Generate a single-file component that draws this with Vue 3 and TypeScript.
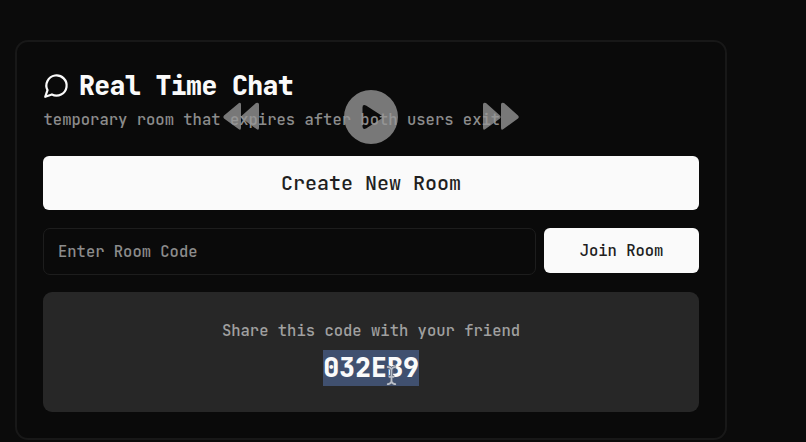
<script setup lang="ts">
import { ref } from 'vue'

const roomCode = ref<string>('032EB9')
const joinCode = ref<string>('')
</script>

<template>
  <main class="page">
    <section class="card">
      <header class="header">
        <h1 class="title">
          <svg class="bubble" viewBox="0 0 24 24" fill="none" stroke="currentColor" stroke-width="2" stroke-linecap="round" stroke-linejoin="round">
            <path d="M7.9 20A9 9 0 1 0 4 16.1L2 22Z" />
          </svg>
          <span>Real Time Chat</span>
        </h1>
        <p class="subtitle">temporary room that expires after both users exit</p>
      </header>
      <button class="button create">Create New Room</button>
      <div class="join-row">
        <input v-model="joinCode" class="field" placeholder="Enter Room Code" />
        <button class="button join">Join Room</button>
      </div>
      <div class="share">
        <p class="share-label">Share this code with your friend</p>
        <div class="code">{{ roomCode }}
          <svg class="cursor" viewBox="0 0 14 24" fill="none">
            <path d="M2 2Q6 2 7 5Q8 2 12 2M7 5V18M4 13h6M2 21Q6 21 7 18Q8 21 12 21" stroke="#4b566b" stroke-width="3.5" />
            <path d="M2 2Q6 2 7 5Q8 2 12 2M7 5V18M4 13h6M2 21Q6 21 7 18Q8 21 12 21" stroke="#b9bec8" stroke-width="1.9" />
          </svg>
        </div>
      </div>
    </section>
    <svg class="player" viewBox="0 0 298 56">
      <g class="skip">
        <path d="M2 26.5L17 14Q19 13 19 15.500V38.500Q19 42 16.500 40L2 29.500Q.5 28 2 26.500Z" />
        <path d="M20 26.500L34 14Q37 13 37 15.500V38.500Q37 42 34.500 40L20 29.500Q18.500 28 20 26.500Z" />
        <path d="M296 26.500L282 14Q279 13 279 15.500V38.500Q279 42 281.500 40L296 29.500Q297.500 28 296 26.500Z" />
        <path d="M278 26.500L264 14Q261 13 261 15.500V38.500Q261 42 263.500 40L278 29.500Q279.500 28 278 26.500Z" />
        <path fill-rule="evenodd" d="M149 1a27 27 0 1 0 0 54a27 27 0 1 0 0-54ZM144 16.500L159.500 26.500Q161 28 159.500 29.500L144 39.500Q140.500 41 140.500 37.500V18.500Q140.500 15 144 16.500Z" />
      </g>
    </svg>
  </main>
</template>

<style>
body {
  background: #0b0b0b;
  overflow: hidden;
}
</style>

<style scoped>
.page {
  box-sizing: border-box;
  position: relative;
  width: 806px;
  height: 442px;
  padding: 40px 0 0 15px;
  overflow: hidden;
  background: #0b0b0b;
  color: #fafafa;
  font-family: "JetBrains Mono", "DejaVu Sans Mono", monospace;
}
.card {
  box-sizing: border-box;
  display: flex;
  flex-direction: column;
  width: 712px;
  height: 400px;
  padding: 27px 26px 26px;
  border: 2px solid #181818;
  border-radius: 13px;
  background: #0a0a0a;
}
.header {
  height: 87px;
  flex: none;
}
.title {
  display: flex;
  align-items: center;
  gap: 9px;
  margin: 0;
  height: 34px;
  font-size: 26.5px;
  font-weight: 800;
  letter-spacing: -0.6px;
  line-height: 34px;
  white-space: nowrap;
}
.bubble {
  width: 27px;
  height: 27px;
  margin-bottom: 2px;
}
.subtitle {
  margin: 6px 0 0 0.5px;
  font-size: 15.54px;
  font-weight: 500;
  line-height: 21px;
  color: #8c8c8c;
  white-space: nowrap;
}
.button {
  flex: none;
  padding: 0;
  border: 0;
  border-radius: 6px;
  background: #fafafa;
  color: #202020;
  font-family: inherit;
  font-weight: 500;
}
.create {
  height: 54px;
  font-size: 20px;
}
.join-row {
  display: flex;
  align-items: flex-start;
  gap: 8px;
  margin-top: 18px;
  height: 64px;
  flex: none;
}
.field {
  box-sizing: border-box;
  flex: 1;
  min-width: 0;
  height: 47px;
  padding: 0 14px;
  border: 1px solid #1d1d1d;
  border-radius: 7px;
  outline: 0;
  background: transparent;
  color: #fafafa;
  font-family: inherit;
  font-size: 15.5px;
  font-weight: 500;
}
.field::placeholder {
  color: #8c8c8c;
  opacity: 1;
}
.join {
  width: 155px;
  height: 45px;
  font-size: 15.5px;
}
.share {
  box-sizing: border-box;
  display: flex;
  flex-direction: column;
  align-items: center;
  height: 120px;
  flex: none;
  padding-top: 28px;
  border-radius: 9px;
  background: #272727;
}
.share-label {
  margin: 0 0 9px;
  font-size: 15.54px;
  font-weight: 500;
  line-height: 21px;
  color: #a0a0a0;
}
.code {
  position: relative;
  height: 36px;
  background: #40506f;
  font-size: 26.6px;
  font-weight: 800;
  line-height: 36px;
}
.cursor {
  position: absolute;
  left: 62px;
  top: 15px;
  width: 13px;
  height: 22px;
}
.player {
  position: absolute;
  left: 222px;
  top: 89px;
  width: 298px;
  height: 56px;
}
.skip {
  fill: #979797;
  fill-opacity: 0.78;
}
</style>
